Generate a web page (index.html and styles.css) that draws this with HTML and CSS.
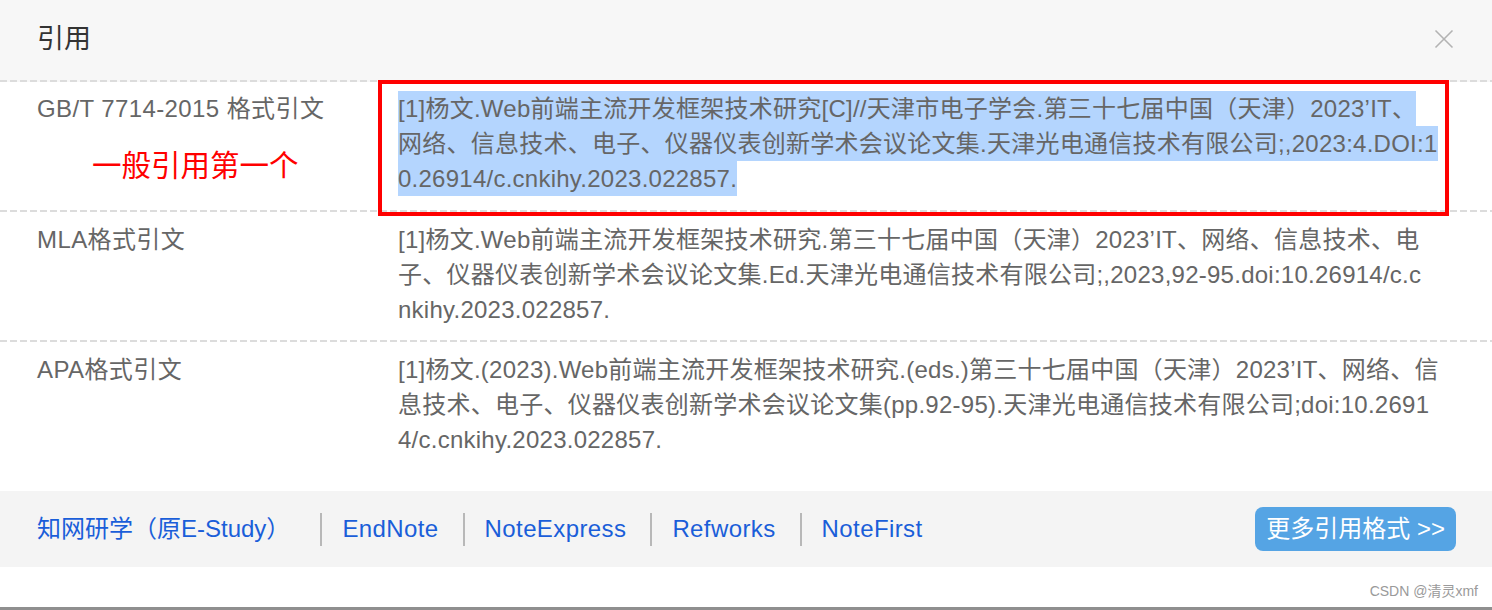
FILE: index.html
```html
<!DOCTYPE html>
<html lang="zh-CN">
<head>
<meta charset="utf-8">
<title>引用</title>
<link rel="stylesheet" href="styles.css">
</head>
<body>
<div class="dialog">
  <header class="head">
    <h1 class="title">引用</h1>
    <button class="close" aria-label="关闭">
      <svg width="20" height="20" viewBox="0 0 20 20"><path d="M1.5 1.5L18.5 18.5M18.5 1.5L1.5 18.5" stroke="#b3b3b3" stroke-width="1.6" fill="none"/></svg>
    </button>
  </header>

  <section class="row first">
    <div class="label">
      <div>GB/T 7714-2015 格式引文</div>
      <div class="note">一般引用第一个</div>
    </div>
    <div class="cite"><span class="sel">[1]杨文.Web前端主流开发框架技术研究[C]//天津市电子学会.第三十七届中国（天津）2023’IT、<br>网络、信息技术、电子、仪器仪表创新学术会议论文集.天津光电通信技术有限公司;,2023:4.DOI:1<br>0.26914/c.cnkihy.2023.022857.</span></div>
    <div class="mark"></div>
  </section>

  <section class="row">
    <div class="label"><div>MLA格式引文</div></div>
    <div class="cite">[1]杨文.Web前端主流开发框架技术研究.第三十七届中国（天津）2023’IT、网络、信息技术、电<br>子、仪器仪表创新学术会议论文集.Ed.天津光电通信技术有限公司;,2023,92-95.doi:10.26914/c.c<br>nkihy.2023.022857.</div>
  </section>

  <section class="row last">
    <div class="label"><div>APA格式引文</div></div>
    <div class="cite">[1]杨文.(2023).Web前端主流开发框架技术研究.(eds.)第三十七届中国（天津）2023’IT、网络、信<br>息技术、电子、仪器仪表创新学术会议论文集(pp.92-95).天津光电通信技术有限公司;doi:10.2691<br>4/c.cnkihy.2023.022857.</div>
  </section>

  <footer class="foot">
    <nav class="links">
      <a href="#">知网研学（原E-Study）</a>
      <span class="sep"></span>
      <a href="#">EndNote</a>
      <span class="sep"></span>
      <a href="#">NoteExpress</a>
      <span class="sep"></span>
      <a href="#">Refworks</a>
      <span class="sep"></span>
      <a href="#">NoteFirst</a>
    </nav>
    <a class="more" href="#">更多引用格式 &gt;&gt;</a>
  </footer>

  <div class="below">
    <span class="wm">CSDN @清灵xmf</span>
  </div>
</div>
</body>
</html>
```
FILE: styles.css
```css
* { box-sizing: border-box; }
html, body { margin: 0; padding: 0; background: #fff; }
body {
  font-family: "Liberation Sans", "Noto Sans CJK SC", sans-serif;
  width: 1492px;
  height: 610px;
  overflow: hidden;
}
.dialog {
  display: flex;
  flex-direction: column;
  height: 610px;
  border-bottom: 3px solid #8f8f8f;
}
.head {
  height: 82px;
  flex: none;
  display: flex;
  align-items: center;
  justify-content: space-between;
  padding: 0 38px 4px 37px;
  background:
    linear-gradient(to right, #dcdcdc 7px, transparent 7px) left bottom / 10px 2px repeat-x,
    #f7f7f7;
}
.title {
  margin: 0;
  font-size: 27px;
  font-weight: normal;
  color: #333;
  line-height: 1;
}
.close {
  border: 0;
  background: none;
  padding: 0;
  width: 20px;
  height: 20px;
  display: block;
}
.close svg { display: block; }

.row {
  position: relative;
  flex: none;
  display: grid;
  grid-template-columns: 361px 1fr;
  padding: 10px 20px 15px 37px;
  font-size: 24px;
  line-height: 35px;
  color: #666;
  background: linear-gradient(to right, #dcdcdc 7px, transparent 7px) left bottom / 10px 2px repeat-x;
}
.row.first { padding-top: 9px; padding-bottom: 16px; }
.row.last { background: none; padding-bottom: 0; }
.label { display: flex; flex-direction: column; letter-spacing: 0.4px; }
.note {
  margin: 22px 0 0 55px;
  font-size: 29.5px;
  line-height: 35px;
  color: #f00;
  letter-spacing: 0;
}
.cite { white-space: nowrap; letter-spacing: 0.25px; }
.sel {
  background: #b4d5fe;
  padding: 4px 0;
}
.mark {
  position: absolute;
  left: 378px;
  top: -2px;
  width: 1071px;
  height: 136px;
  border: 4px solid #f00;
  pointer-events: none;
}

.foot {
  margin-top: auto;
  height: 76px;
  flex: none;
  background: #f4f4f4;
  display: flex;
  align-items: center;
  justify-content: space-between;
  padding: 0 36px 0 37px;
  font-size: 24px;
}
.links { display: flex; align-items: center; letter-spacing: 0.4px; }
.links a {
  color: #1a5ed9;
  text-decoration: none;
  line-height: 30px;
}
.links a:first-child { letter-spacing: 0; margin-right: 6px; }
.sep {
  width: 2px;
  height: 33px;
  background: #b8b8b8;
  margin: 0 20px 0 24px;
}
.more {
  display: block;
  height: 44px;
  line-height: 44px;
  padding: 0 11px;
  background: #55a4e4;
  color: #fff;
  border-radius: 8px;
  text-decoration: none;
}
.below {
  height: 40px;
  flex: none;
  display: flex;
  justify-content: flex-end;
  align-items: flex-end;
  padding: 0 14px 7px 0;
}
.wm {
  font-size: 14px;
  color: #9a9a9a;
  line-height: 18px;
}
```
